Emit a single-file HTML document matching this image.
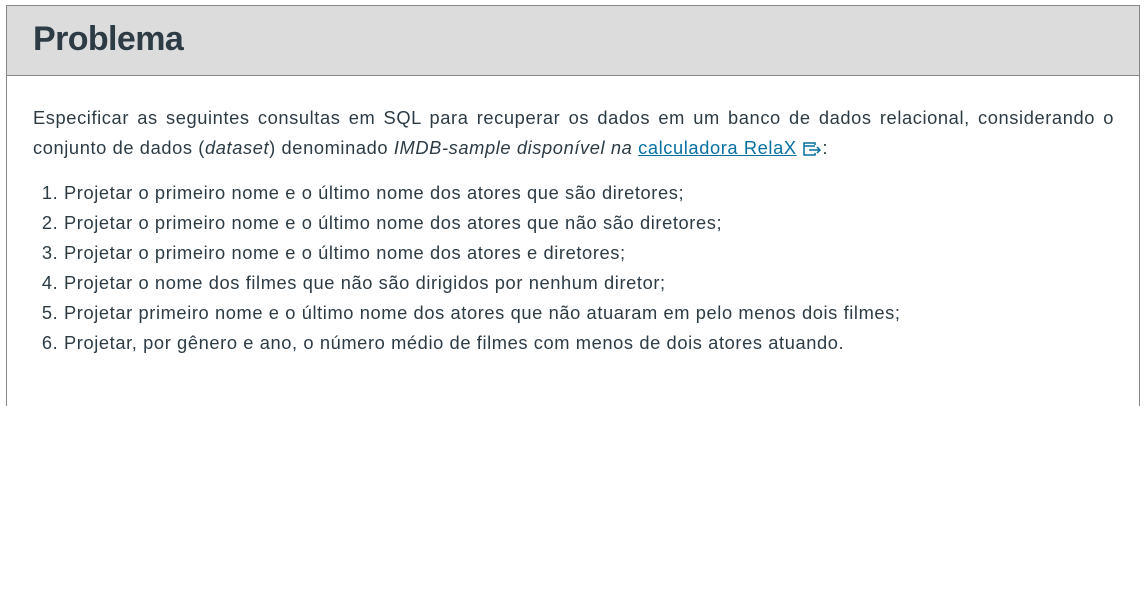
<!DOCTYPE html>
<html><head><meta charset="utf-8"><style>
html,body{margin:0;padding:0;background:#fff;width:1144px;height:595px;overflow:hidden}
body{font-family:"Liberation Sans",sans-serif;color:#2d3b45}
.box{position:absolute;left:6px;top:5px;width:1132px;height:400px;border-left:1px solid #888;border-right:1px solid #888;border-top:1px solid #888}
.hd{height:69px;background:#dcdcdc;border-bottom:1px solid #888;position:relative}
.hd h1{margin:0;position:absolute;left:26px;top:14px;font-size:34px;font-weight:bold;color:#2d3b45;letter-spacing:-0.6px}
.p{position:absolute;left:26px;top:97px;width:1081px;font-size:18.3px;letter-spacing:0.6px;line-height:30px;text-align:justify;margin:0}
a{color:#0770a3;text-decoration:underline}
ol{position:absolute;left:26px;top:172px;margin:0;padding-left:31px;font-size:18.3px;letter-spacing:0.6px;line-height:30px}
</style></head><body>
<div class="box">
<div class="hd"><h1>Problema</h1></div>
<p class="p">Especificar as seguintes consultas em SQL para recuperar os dados em um banco de dados relacional, considerando o conjunto de dados (<i>dataset</i>) denominado <i>IMDB-sample disponível na</i> <a>calculadora RelaX</a> <svg width="20" height="16" viewBox="0 0 20 16" style="vertical-align:-3px"><path d="M13 4V2H2v12h11v-2" fill="none" stroke="#0770a3" stroke-width="1.5"/><path d="M2 5h11M7 9h11M15 6l3 3-3 3" fill="none" stroke="#0770a3" stroke-width="1.5"/></svg>:</p>
<ol>
<li>Projetar o primeiro nome e o último nome dos atores que são diretores;</li>
<li>Projetar o primeiro nome e o último nome dos atores que não são diretores;</li>
<li>Projetar o primeiro nome e o último nome dos atores e diretores;</li>
<li>Projetar o nome dos filmes que não são dirigidos por nenhum diretor;</li>
<li>Projetar primeiro nome e o último nome dos atores que não atuaram em pelo menos dois filmes;</li>
<li>Projetar, por gênero e ano, o número médio de filmes com menos de dois atores atuando.</li>
</ol>
</div>
</body></html>
